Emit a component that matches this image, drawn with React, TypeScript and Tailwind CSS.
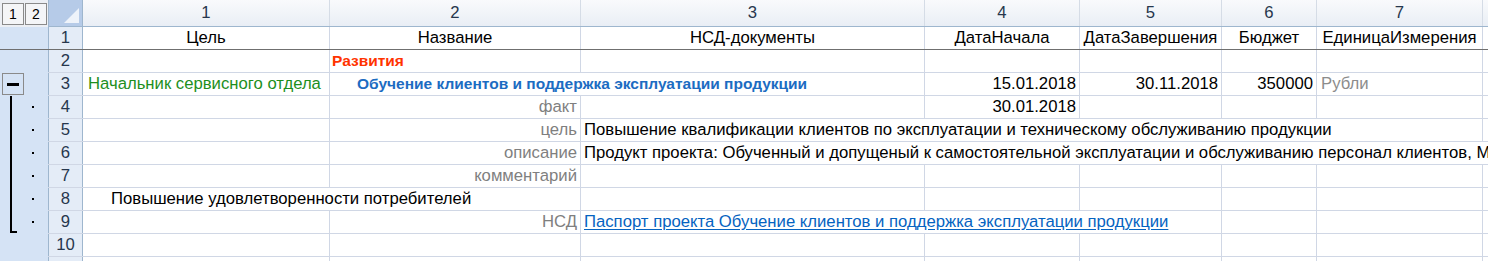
import type { ReactNode } from "react";

const font = { fontFamily: '"Liberation Sans", Arial, sans-serif' };

type CellProps = {
  w: string;
  children?: ReactNode;
  className?: string;
};

// plain worksheet cell, right gridline only (row wrapper draws the bottom one)
function Cell({ w, children, className = "" }: CellProps) {
  return (
    <div
      className={`flex h-full shrink-0 items-center overflow-hidden whitespace-nowrap border-r border-[#d0d7e5] px-[3px] ${w} ${className}`}
    >
      {children}
    </div>
  );
}

type Mark = "none" | "freeze" | "minus" | "dot" | "end";

function Outline({ kind }: { kind: Mark }) {
  return (
    <div
      className={`relative h-full w-[48px] shrink-0 bg-[#d5e3f5] ${
        kind === "freeze" ? "border-b border-[#6f6f6f]" : ""
      }`}
    >
      {kind === "minus" && (
        <div className="absolute left-[2px] top-0 flex h-[22px] w-[22px] items-center justify-center border border-[#8a8a8a]">
          <div className="h-[3px] w-[12px] bg-black" />
        </div>
      )}
      {(kind === "dot" || kind === "end") && (
        <>
          <div
            className={`absolute left-[10px] top-0 w-[2px] bg-black ${
              kind === "end" ? "h-[22px]" : "h-full"
            }`}
          />
          <div className="absolute left-[32px] top-[10px] h-[2px] w-[2px] bg-black" />
        </>
      )}
      {kind === "end" && (
        <div className="absolute left-[10px] top-[20px] h-[2px] w-[7px] bg-black" />
      )}
    </div>
  );
}

type Row = {
  n: string;
  outline: Mark;
  cells: ReactNode;
};

const gray = "text-[#7f7f7f]";

const blank = (
  <>
    <Cell w="w-[247px]" />
    <Cell w="w-[251px]" />
    <Cell w="w-[344px]" />
    <Cell w="w-[155px]" />
    <Cell w="w-[142px]" />
    <Cell w="w-[95px]" />
    <Cell w="w-[166px]" />
    <Cell w="flex-1" />
  </>
);

const rows: Row[] = [
  {
    n: "1",
    outline: "freeze",
    cells: (
      <>
        <Cell w="w-[247px]" className="justify-center">Цель</Cell>
        <Cell w="w-[251px]" className="justify-center">Название</Cell>
        <Cell w="w-[344px]" className="justify-center">НСД-документы</Cell>
        <Cell w="w-[155px]" className="justify-center">ДатаНачала</Cell>
        <Cell w="w-[142px]" className="justify-center">ДатаЗавершения</Cell>
        <Cell w="w-[95px]" className="justify-center">Бюджет</Cell>
        <Cell w="w-[166px]" className="justify-center">ЕдиницаИзмерения</Cell>
        <Cell w="flex-1" />
      </>
    ),
  },
  {
    n: "2",
    outline: "none",
    cells: (
      <>
        <Cell w="w-[247px]" />
        <Cell w="w-[251px]" className="pl-[2px] text-[15.5px] font-bold text-[#ff3300]">
          Развития
        </Cell>
        <Cell w="w-[344px]" />
        <Cell w="w-[155px]" />
        <Cell w="w-[142px]" />
        <Cell w="w-[95px]" />
        <Cell w="w-[166px]" />
        <Cell w="flex-1" />
      </>
    ),
  },
  {
    n: "3",
    outline: "minus",
    cells: (
      <>
        <Cell w="w-[247px]" className="pl-[5px] text-[#1d8f1d]">
          Начальник сервисного отдела
        </Cell>
        <Cell w="w-[595px]" className="pl-[27px] text-[15.5px] font-bold text-[#1c6cc2]">
          Обучение клиентов и поддержка эксплуатации продукции
        </Cell>
        <Cell w="w-[155px]" className="justify-end">15.01.2018</Cell>
        <Cell w="w-[142px]" className="justify-end">30.11.2018</Cell>
        <Cell w="w-[95px]" className="justify-end">350000</Cell>
        <Cell w="w-[166px]" className="pl-[4px] text-[#8c8c8c]">Рубли</Cell>
        <Cell w="flex-1" />
      </>
    ),
  },
  {
    n: "4",
    outline: "dot",
    cells: (
      <>
        <Cell w="w-[247px]" />
        <Cell w="w-[251px]" className={`justify-end ${gray}`}>факт</Cell>
        <Cell w="w-[344px]" />
        <Cell w="w-[155px]" className="justify-end">30.01.2018</Cell>
        <Cell w="w-[142px]" />
        <Cell w="w-[95px]" />
        <Cell w="w-[166px]" />
        <Cell w="flex-1" />
      </>
    ),
  },
  {
    n: "5",
    outline: "dot",
    cells: (
      <>
        <Cell w="w-[247px]" />
        <Cell w="w-[251px]" className={`justify-end ${gray}`}>цель</Cell>
        <Cell w="w-[902px]">
          Повышение квалификации клиентов по эксплуатации и техническому обслуживанию продукции
        </Cell>
        <Cell w="flex-1" />
      </>
    ),
  },
  {
    n: "6",
    outline: "dot",
    cells: (
      <>
        <Cell w="w-[247px]" />
        <Cell w="w-[251px]" className={`justify-end ${gray}`}>описание</Cell>
        <Cell w="flex-1" className="border-r-0">
          Продукт проекта: Обученный и допущеный к самостоятельной эксплуатации и обслуживанию персонал клиентов, М
        </Cell>
      </>
    ),
  },
  {
    n: "7",
    outline: "dot",
    cells: (
      <>
        <Cell w="w-[247px]" />
        <Cell w="w-[251px]" className={`justify-end ${gray}`}>комментарий</Cell>
        <Cell w="w-[344px]" />
        <Cell w="w-[155px]" />
        <Cell w="w-[142px]" />
        <Cell w="w-[95px]" />
        <Cell w="w-[166px]" />
        <Cell w="flex-1" />
      </>
    ),
  },
  {
    n: "8",
    outline: "dot",
    cells: (
      <>
        <Cell w="w-[498px]" className="pl-[28px]">
          Повышение удовлетворенности потребителей
        </Cell>
        <Cell w="w-[344px]" />
        <Cell w="w-[155px]" />
        <Cell w="w-[142px]" />
        <Cell w="w-[95px]" />
        <Cell w="w-[166px]" />
        <Cell w="flex-1" />
      </>
    ),
  },
  {
    n: "9",
    outline: "end",
    cells: (
      <>
        <Cell w="w-[247px]" />
        <Cell w="w-[251px]" className={`justify-end ${gray}`}>НСД</Cell>
        <Cell w="w-[641px]">
          <a href="#" className="text-[#0563c1] underline underline-offset-2">
            Паспорт проекта Обучение клиентов и поддержка эксплуатации продукции
          </a>
        </Cell>
        <Cell w="w-[95px]" />
        <Cell w="w-[166px]" />
        <Cell w="flex-1" />
      </>
    ),
  },
  { n: "10", outline: "none", cells: blank },
  { n: "", outline: "none", cells: blank },
];

const colHeads = [
  { w: "w-[247px]", label: "1" },
  { w: "w-[251px]", label: "2" },
  { w: "w-[344px]", label: "3" },
  { w: "w-[155px]", label: "4" },
  { w: "w-[142px]", label: "5" },
  { w: "w-[95px]", label: "6" },
  { w: "w-[166px]", label: "7" },
];

export default function App() {
  return (
    <div
      className="h-[261px] w-[1488px] overflow-hidden bg-white text-[16.7px] text-black"
      style={font}
    >
      {/* column headers + outline level buttons */}
      <div className="flex h-[27px]">
        <div className="flex w-[48px] shrink-0 items-start gap-px bg-[#eceff4] pl-[2px] pt-[3px]">
          {["1", "2"].map((l) => (
            <div
              key={l}
              className="flex h-[22px] w-[22px] items-center justify-center border border-[#8a8a8a] bg-[#f4f5f7] text-[14px] leading-none"
            >
              {l}
            </div>
          ))}
        </div>
        <div className="flex flex-1 border-b border-[#9eb6ce]">
          <div className="relative w-[35px] shrink-0 border-x border-[#9eb6ce] bg-[#b6cbe8]">
            <div className="absolute bottom-[3px] right-[3px] h-0 w-0 border-b-[15px] border-l-[15px] border-b-[#eef3fa] border-l-transparent" />
          </div>
          {colHeads.map((c) => (
            <div
              key={c.label}
              className={`flex shrink-0 items-center justify-center border-r border-[#d5dce6] bg-gradient-to-b from-[#f9fafc] to-[#e9eef5] text-[#27374d] ${c.w}`}
            >
              {c.label}
            </div>
          ))}
          <div className="flex-1 bg-gradient-to-b from-[#f9fafc] to-[#e9eef5]" />
        </div>
      </div>

      {rows.map((r, i) => (
        <div key={i} className="flex h-[23px]">
          <Outline kind={r.outline} />
          <div
            className={`flex flex-1 border-b ${
              r.n === "1" ? "border-[#6f6f6f]" : "border-[#d0d7e5]"
            }`}
          >
            <div className="flex w-[35px] shrink-0 items-center justify-center border-x border-[#9eb6ce] bg-[#e4ecf7] text-[#27374d]">
              {r.n}
            </div>
            {r.cells}
          </div>
        </div>
      ))}
    </div>
  );
}
